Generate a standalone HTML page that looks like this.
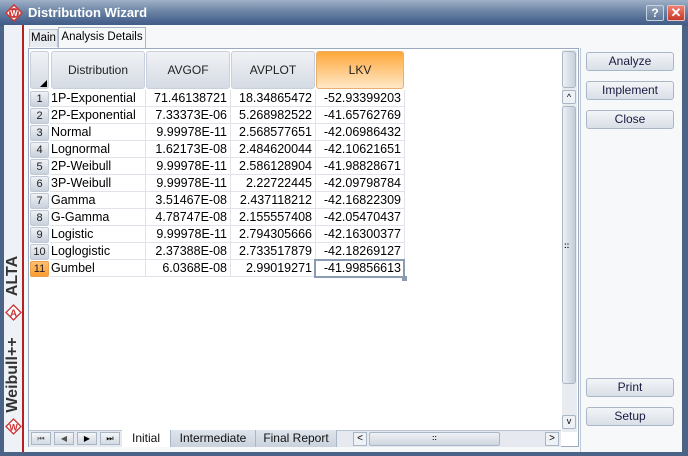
<!DOCTYPE html>
<html><head><style>
*{margin:0;padding:0;box-sizing:border-box}
body{width:688px;height:456px;overflow:hidden;font-family:"Liberation Sans",sans-serif;font-size:12px;position:relative;background:#4a6387}
.a{position:absolute}
.title{left:0;top:0;width:688px;height:26px;background:linear-gradient(#9fb0c6,#6f88a8 40%,#4b6690 80%,#3f5b84)}
.title span{position:absolute;left:28px;top:5px;color:#fff;font-weight:bold;font-size:13px}
.client{left:4px;top:25px;width:678px;height:427px;background:#f7f8fa}
.strip{left:4px;top:25px;width:20px;height:427px;background:#eef1f5;border-right:2px solid #b62020}
.grid{left:28px;top:48px;width:551px;height:399px;background:#fff;border:1px solid #9aaac0}
.hdr{background:linear-gradient(#f0f2f5,#d5dbe4);border:1px solid #c7d0dc;border-radius:3px;text-align:center;line-height:37px;color:#222}
.cell{height:17px;line-height:17px;border-right:1px solid #e0e4ea;border-bottom:1px solid #e0e4ea;color:#000;font-size:12.5px;white-space:nowrap}
.num{background:linear-gradient(#eef1f5,#c9d1dc);border:1px solid #c0c9d5;border-radius:2px;text-align:center;font-size:11px;color:#222;line-height:15px}
.btn{left:586px;width:88px;height:19px;border:1px solid #a9b6c6;border-radius:3px;background:linear-gradient(#f3f5f8,#d9dfe7);text-align:center;line-height:17px;color:#1a1a40;font-size:12px}
.tab{top:430px;height:17px;line-height:16px;text-align:center;font-size:12px;color:#111}
</style></head><body>
<div class="a title"><span>Distribution Wizard</span>
<svg class="a" style="left:5px;top:4px" width="18" height="18"><polygon points="9,1 17,9 9,17 1,9" fill="#fff" stroke="#c33" stroke-width="1.5"/><circle cx="9" cy="9" r="5" fill="#c33"/><text x="9" y="12" font-size="8" font-weight="bold" fill="#fff" text-anchor="middle" font-family="Liberation Sans">W</text></svg>
<div class="a" style="left:646px;top:5px;width:18px;height:16px;border:1px solid #c8d2de;border-radius:2px;background:linear-gradient(#93a5bd,#5d7597);color:#fff;font-weight:bold;text-align:center;line-height:14px;font-size:12px">?</div>
<div class="a" style="left:667px;top:5px;width:18px;height:16px;border:1px solid #e8c0c0;border-radius:2px;background:linear-gradient(#ee8070,#c83828);color:#fff;font-weight:bold;text-align:center;line-height:14px;font-size:13px">✕</div>
</div>
<div class="a client"></div>
<div class="a strip"></div>
<div class="a" style="left:-17px;top:266px;width:60px;height:20px;transform:rotate(-90deg);font-weight:bold;font-size:16px;color:#333;text-align:center;line-height:20px">ALTA</div>
<svg class="a" style="left:5px;top:304px" width="17" height="17"><polygon points="8.5,1 16,8.5 8.5,16 1,8.5" fill="#fff" stroke="#c33" stroke-width="1.3"/><text x="8.5" y="12.5" font-size="10" font-weight="bold" fill="#c33" text-anchor="middle" font-family="Liberation Sans">A</text></svg>
<div class="a" style="left:-32px;top:365px;width:90px;height:20px;transform:rotate(-90deg);font-weight:bold;font-size:16px;color:#333;text-align:center;line-height:20px">Weibull++</div>
<svg class="a" style="left:5px;top:418px" width="17" height="17"><polygon points="8.5,1 16,8.5 8.5,16 1,8.5" fill="#fff" stroke="#c33" stroke-width="1.3"/><text x="8.5" y="12.5" font-size="9" font-weight="bold" fill="#c33" text-anchor="middle" font-family="Liberation Sans">W</text></svg>
<div class="a" style="left:29px;top:29px;width:29px;height:18px;border:1px solid #b8c4d2;border-bottom:none;background:#e8ecf1;text-align:center;line-height:17px;font-size:11.5px">Main</div>
<div class="a" style="left:58px;top:27px;width:88px;height:21px;border:1px solid #a8b6c8;border-bottom:none;background:#f7f8fa;text-align:center;line-height:19px;font-size:11.5px">Analysis Details</div>
<div class="a grid"></div>
<div class="a hdr" style="left:30px;top:51px;width:19px;height:38px"></div>
<div class="a" style="left:40px;top:80px;width:0;height:0;border-left:7px solid transparent;border-bottom:7px solid #000"></div>
<div class="a hdr" style="left:51px;top:51px;width:94px;height:38px">Distribution</div>
<div class="a hdr" style="left:146px;top:51px;width:84px;height:38px">AVGOF</div>
<div class="a hdr" style="left:231px;top:51px;width:84px;height:38px">AVPLOT</div>
<div class="a hdr" style="left:316px;top:51px;width:88px;height:38px;background:linear-gradient(#ffa83a,#ffe8c8);border-color:#e8b070">LKV</div>
<div id="rows"></div>
<script>
var d=[["1P-Exponential","71.46138721","18.34865472","-52.93399203"],["2P-Exponential","7.33373E-06","5.268982522","-41.65762769"],["Normal","9.99978E-11","2.568577651","-42.06986432"],["Lognormal","1.62173E-08","2.484620044","-42.10621651"],["2P-Weibull","9.99978E-11","2.586128904","-41.98828671"],["3P-Weibull","9.99978E-11","2.22722445","-42.09798784"],["Gamma","3.51467E-08","2.437118212","-42.16822309"],["G-Gamma","4.78747E-08","2.155557408","-42.05470437"],["Logistic","9.99978E-11","2.794305666","-42.16300377"],["Loglogistic","2.37388E-08","2.733517879","-42.18269127"],["Gumbel","6.0368E-08","2.99019271","-41.99856613"]];
var h="";
for(var i=0;i<11;i++){var y=90+i*17;
h+='<div class="a num" style="left:30px;top:'+(y+1)+'px;width:19px;height:16px;'+(i==10?'background:linear-gradient(#ffc070,#ff9c30);border-color:#e8a050':'')+'">'+(i+1)+'</div>';
h+='<div class="a cell" style="left:50px;top:'+y+'px;width:96px;padding-left:1px">'+d[i][0]+'</div>';
h+='<div class="a cell" style="left:146px;top:'+y+'px;width:85px;text-align:right;padding-right:3px">'+d[i][1]+'</div>';
h+='<div class="a cell" style="left:231px;top:'+y+'px;width:85px;text-align:right;padding-right:3px">'+d[i][2]+'</div>';
h+='<div class="a cell" style="left:316px;top:'+y+'px;width:89px;text-align:right;padding-right:3px">'+d[i][3]+'</div>';}
document.getElementById("rows").innerHTML=h;
</script>
<div class="a" style="left:314px;top:259px;width:91px;height:19px;border:2px solid #8a9bb2"></div>
<div class="a" style="left:402px;top:276px;width:5px;height:5px;background:#8a9bb2"></div>
<div class="a" style="left:562px;top:50px;width:15px;height:382px;background:#e8ecf1"></div>
<div class="a" style="left:562px;top:51px;width:14px;height:37px;border:1px solid #a9b6c6;border-radius:3px;background:linear-gradient(90deg,#eef1f5,#c7d0dc)"></div>
<div class="a" style="left:562px;top:90px;width:14px;height:14px;border:1px solid #a9b6c6;border-radius:2px;background:#eef1f5;font-size:9px;text-align:center;line-height:12px">^</div>
<div class="a" style="left:562px;top:106px;width:14px;height:278px;border:1px solid #a9b6c6;border-radius:3px;background:linear-gradient(90deg,#eef1f5,#c3ccd8)"></div>
<div class="a" style="left:564px;top:241px;font-size:8px;font-weight:bold">::</div>
<div class="a" style="left:562px;top:415px;width:14px;height:14px;border:1px solid #a9b6c6;border-radius:2px;background:#eef1f5;font-size:9px;text-align:center;line-height:11px">v</div>
<div class="a" style="left:29px;top:430px;width:532px;height:17px;background:#e6eaf0;border-top:1px solid #b8c4d2"></div>
<div class="a" style="left:31px;top:432px;width:20px;height:13px;border:1px solid #a9b6c6;background:linear-gradient(#f3f5f8,#d3dae3);font-size:8px;text-align:center;line-height:11px;color:#555">⏮</div>
<div class="a" style="left:54px;top:432px;width:20px;height:13px;border:1px solid #a9b6c6;background:linear-gradient(#f3f5f8,#d3dae3);font-size:8px;text-align:center;line-height:11px;color:#555">◀</div>
<div class="a" style="left:77px;top:432px;width:20px;height:13px;border:1px solid #a9b6c6;background:linear-gradient(#f3f5f8,#d3dae3);font-size:8px;text-align:center;line-height:11px">▶</div>
<div class="a" style="left:100px;top:432px;width:20px;height:13px;border:1px solid #a9b6c6;background:linear-gradient(#f3f5f8,#d3dae3);font-size:8px;text-align:center;line-height:11px">⏭</div>
<div class="a tab" style="left:122px;width:48px;background:#fff">Initial</div>
<div class="a tab" style="left:170px;width:85px;background:linear-gradient(#dfe5ec,#c9d2dd);border-left:1px solid #a9b6c6">Intermediate</div>
<div class="a tab" style="left:255px;width:82px;background:linear-gradient(#dfe5ec,#c9d2dd);border-left:1px solid #a9b6c6;border-right:1px solid #a9b6c6">Final Report</div>
<div class="a" style="left:353px;top:432px;width:14px;height:14px;border:1px solid #a9b6c6;background:#eef1f5;font-size:10px;text-align:center;line-height:12px">&lt;</div>
<div class="a" style="left:369px;top:432px;width:131px;height:14px;border:1px solid #a9b6c6;border-radius:2px;background:linear-gradient(#eef1f5,#cfd6e0);font-size:7px;text-align:center;line-height:12px;font-weight:bold">::</div>
<div class="a" style="left:545px;top:432px;width:14px;height:14px;border:1px solid #a9b6c6;background:#eef1f5;font-size:10px;text-align:center;line-height:12px">&gt;</div>
<div class="a" style="left:580px;top:48px;width:102px;height:404px;background:#f7f8fa;border-left:1px solid #c0cad6"></div>
<div class="a btn" style="top:52px">Analyze</div>
<div class="a btn" style="top:81px">Implement</div>
<div class="a btn" style="top:110px">Close</div>
<div class="a btn" style="top:378px">Print</div>
<div class="a btn" style="top:407px">Setup</div>
</body></html>
